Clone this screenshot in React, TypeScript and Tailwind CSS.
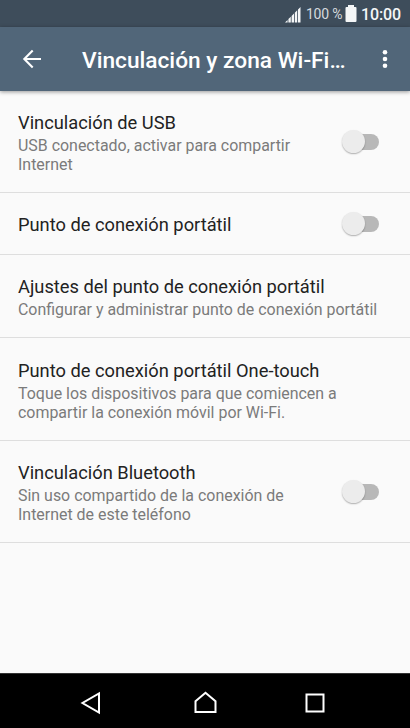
type Setting = {
  title: string;
  lines?: string[];
  toggle?: boolean;
  height: string;
};

const settings: Setting[] = [
  {
    title: 'Vinculación de USB',
    lines: ['USB conectado, activar para compartir', 'Internet'],
    toggle: true,
    height: 'h-[102px]',
  },
  { title: 'Punto de conexión portátil', toggle: true, height: 'h-[62px]' },
  {
    title: 'Ajustes del punto de conexión portátil',
    lines: ['Configurar y administrar punto de conexión portátil'],
    height: 'h-[83px]',
  },
  {
    title: 'Punto de conexión portátil One-touch',
    lines: ['Toque los dispositivos para que comiencen a', 'compartir la conexión móvil por Wi-Fi.'],
    height: 'h-[103px]',
  },
  {
    title: 'Vinculación Bluetooth',
    lines: ['Sin uso compartido de la conexión de', 'Internet de este teléfono'],
    toggle: true,
    height: 'h-[102px]',
  },
];

function StatusBar() {
  return (
    <div className="flex h-[27px] shrink-0 items-center justify-end bg-[#3e4d5b] pr-[9px] text-[#f4f6f7]">
      <svg width="16" height="16" viewBox="0 0 16 16" className="mt-[2px]" fill="currentColor">
        <path d="M0 15.5l2.6-2.6v2.6zM3.4 15.5v-3.4l2.4-2.4v5.8zM6.6 15.5V8.9L9 6.5v9zM9.8 15.5V5.7l2.4-2.4v12.2zM13 15.5V2.5L15.5 0v15.5z" />
      </svg>
      <span className="ml-[5px] w-[36px] whitespace-nowrap pt-px text-[14px] leading-none tracking-[-0.2px] text-[#d5dade]">100 %</span>
      <svg width="12" height="17" viewBox="0 0 12 17" className="ml-[3px]" fill="currentColor">
        <path d="M3 0h6v2h1.5q1 0 1 1v13q0 1-1 1h-9q-1 0-1-1V3q0-1 1-1H3z" />
      </svg>
      <span className="ml-[4px] pt-[2px] text-[16px] font-medium leading-none tracking-[-0.1px]">10:00</span>
    </div>
  );
}

function Header() {
  return (
    <header className="z-10 flex h-16 shrink-0 items-center bg-[#516679] text-white shadow-[0_1px_4px_rgba(0,0,0,0.4)]">
      <svg width="20" height="20" viewBox="0 0 20 20" className="ml-[22px]" fill="none" stroke="currentColor" strokeWidth="2.1">
        <path d="M19 10H3M10.7 1.6L2.3 10l8.4 8.4" />
      </svg>
      <h1 className="ml-[40px] w-[280px] whitespace-nowrap pt-[4px] text-[22.7px] font-medium leading-none">
        Vinculación y zona Wi-Fi…
      </h1>
      <svg width="6" height="20" viewBox="0 0 6 20" className="ml-[20px]" fill="currentColor">
        <circle cx="3" cy="3.2" r="2.3" />
        <circle cx="3" cy="10" r="2.3" />
        <circle cx="3" cy="16.8" r="2.3" />
      </svg>
    </header>
  );
}

function Toggle() {
  return (
    <div className="flex w-[37px] shrink-0 items-center">
      <div className="z-10 size-[23px] shrink-0 rounded-full bg-[#ececec] shadow-[0_1px_1.5px_rgba(0,0,0,0.3)]" />
      <div className="-ml-[12px] h-4 w-[26px] shrink-0 rounded-full bg-[#b8b8b8]" />
    </div>
  );
}

function SettingRow({ title, lines, toggle, height }: Setting) {
  return (
    <div className={`flex shrink-0 items-center justify-between border-b border-[#dedede] pl-[18px] pr-[31px] ${height}`}>
      <div className="whitespace-nowrap pt-0.5">
        <p className="text-[18.3px] leading-[23px] text-[#222]">{title}</p>
        {lines && (
          <div className="pt-0.5 text-[15.95px] leading-[19px] text-[#7b7b7b]">
            {lines.map((line) => (
              <p key={line}>{line}</p>
            ))}
          </div>
        )}
      </div>
      {toggle && <Toggle />}
    </div>
  );
}

function NavBar() {
  return (
    <nav className="flex h-[55px] shrink-0 items-center border-t border-[#333] bg-black pt-[3px] text-white">
      <svg width="22" height="24" viewBox="0 0 22 24" className="ml-[80px]" fill="none" stroke="currentColor" strokeWidth="2">
        <path d="M19 2.5v19L2.5 12z" />
      </svg>
      <svg width="24" height="24" viewBox="0 0 24 24" className="ml-[91px]" fill="none" stroke="currentColor" strokeWidth="2">
        <path d="M2.5 10.2L12.5 1.8l10 8.4V21h-20z" />
      </svg>
      <svg width="20" height="20" viewBox="0 0 20 20" className="ml-[88px]" fill="none" stroke="currentColor" strokeWidth="2">
        <path d="M1.5 1.5h17v17h-17z" />
      </svg>
    </nav>
  );
}

export default function App() {
  return (
    <div className="flex h-[728px] w-[410px] flex-col overflow-hidden bg-[#fafafa] font-[Roboto,sans-serif]">
      <StatusBar />
      <Header />
      <main className="flex flex-1 flex-col">
        {settings.map((setting) => (
          <SettingRow key={setting.title} {...setting} />
        ))}
      </main>
      <NavBar />
    </div>
  );
}
